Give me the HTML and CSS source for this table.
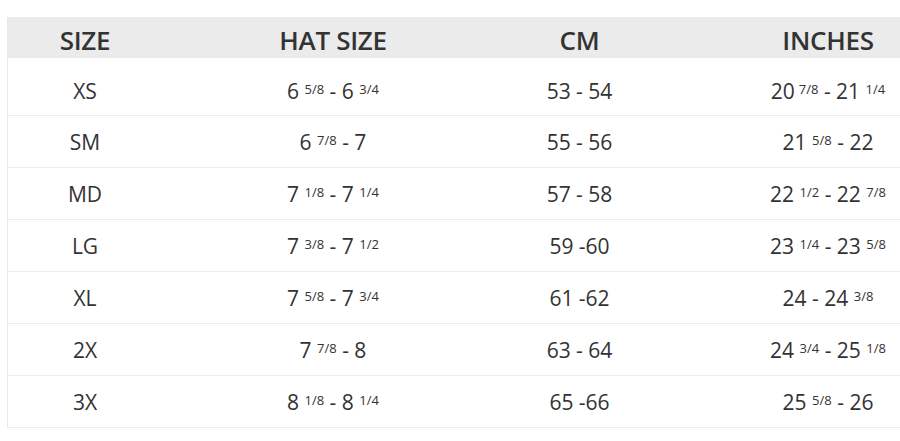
FILE: index.html
```html
<!DOCTYPE html>
<html lang="en">
<head>
<meta charset="utf-8">
<title>Hat Size Chart</title>
<link rel="stylesheet" href="styles.css">
</head>
<body>
<div class="chart">
  <div class="row head">
    <div class="cell">SIZE</div>
    <div class="cell">HAT SIZE</div>
    <div class="cell">CM</div>
    <div class="cell">INCHES</div>
  </div>
  <div class="row first">
    <div class="cell">XS</div>
    <div class="cell">6 <sup>5/8</sup> - 6 <sup>3/4</sup></div>
    <div class="cell">53 - 54</div>
    <div class="cell">20<sup class="tight">7/8</sup> - 21 <sup>1/4</sup></div>
  </div>
  <div class="row">
    <div class="cell">SM</div>
    <div class="cell">6 <sup>7/8</sup> - 7</div>
    <div class="cell">55 - 56</div>
    <div class="cell">21 <sup>5/8</sup> - 22</div>
  </div>
  <div class="row">
    <div class="cell">MD</div>
    <div class="cell">7 <sup>1/8</sup> - 7 <sup>1/4</sup></div>
    <div class="cell">57 - 58</div>
    <div class="cell">22 <sup>1/2</sup> - 22 <sup>7/8</sup></div>
  </div>
  <div class="row">
    <div class="cell">LG</div>
    <div class="cell">7 <sup>3/8</sup> - 7 <sup>1/2</sup></div>
    <div class="cell">59 -60</div>
    <div class="cell">23 <sup>1/4</sup> - 23 <sup>5/8</sup></div>
  </div>
  <div class="row">
    <div class="cell">XL</div>
    <div class="cell">7 <sup>5/8</sup> - 7 <sup>3/4</sup></div>
    <div class="cell">61 -62</div>
    <div class="cell">24 - 24 <sup>3/8</sup></div>
  </div>
  <div class="row">
    <div class="cell">2X</div>
    <div class="cell">7 <sup>7/8</sup> - 8</div>
    <div class="cell">63 - 64</div>
    <div class="cell">24 <sup>3/4</sup> - 25 <sup>1/8</sup></div>
  </div>
  <div class="row">
    <div class="cell">3X</div>
    <div class="cell">8 <sup>1/8</sup> - 8 <sup>1/4</sup></div>
    <div class="cell">65 -66</div>
    <div class="cell">25 <sup>5/8</sup> - 26</div>
  </div>
</div>
</body>
</html>
```
FILE: styles.css
```css
html, body {
  margin: 0;
  padding: 0;
  background: #ffffff;
  overflow: hidden;
}

body {
  font-family: "Open Sans", "Liberation Sans", sans-serif;
  color: #333333;
}

.chart {
  margin: 17px 0 0 7px;
  width: 893px;
  box-sizing: border-box;
  border-left: 1px solid #e8e8e8;
}

.row {
  display: grid;
  grid-template-columns: 154px 342px 151px 245px;
  align-items: center;
  height: 52px;
  box-sizing: border-box;
  border-bottom: 1px solid #ececec;
  font-size: 21px;
  line-height: 1;
}

.row.head {
  height: 41px;
  background: #ebebeb;
  border-bottom: none;
  font-size: 26px;
  font-weight: 600;
  letter-spacing: -0.3px;
  padding-top: 3px;
}

.row.first {
  height: 58px;
  padding-top: 8px;
}

.cell {
  text-align: center;
  white-space: nowrap;
  padding-top: 2px;
}

.cell:last-child {
  padding-left: 101px;
}

sup {
  font-size: 13px;
  line-height: 0;
  vertical-align: 5px;
}

sup.tight {
  margin-left: 4px;
}
```
